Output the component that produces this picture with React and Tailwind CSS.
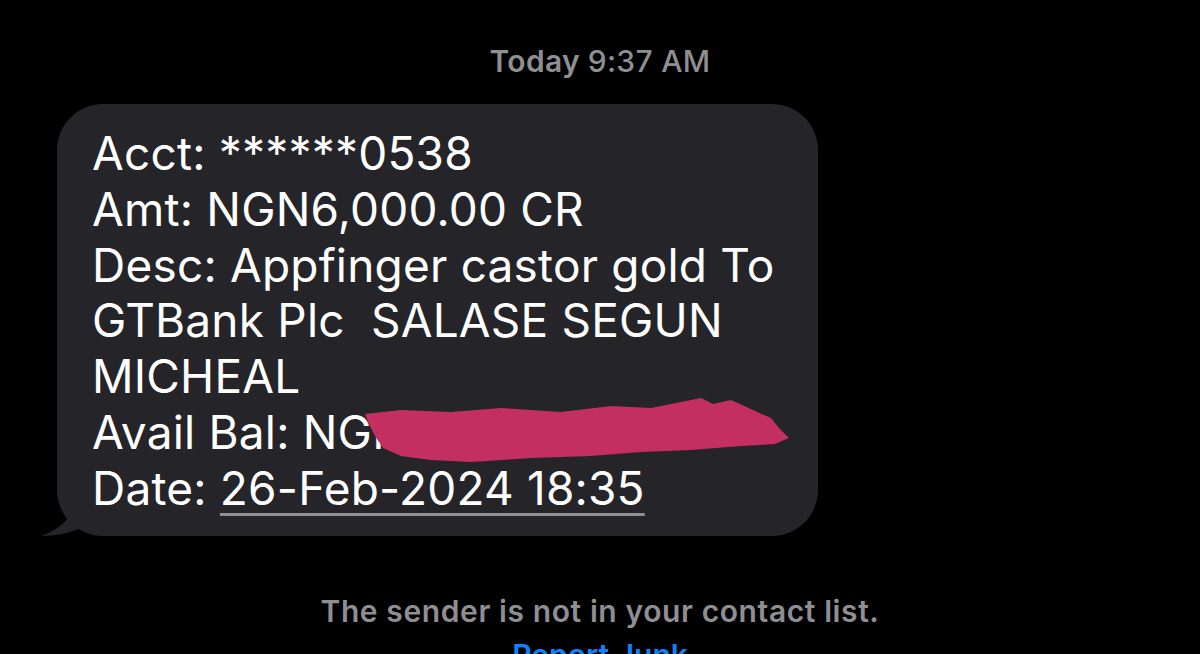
const lines = [
  "Acct: ******0538",
  "Amt: NGN6,000.00 CR",
  "Desc: Appfinger castor gold To",
  "GTBank Plc  SALASE SEGUN",
  "MICHEAL",
];

const Scribble = () => (
  <svg
    className="absolute left-[304px] top-[288px]"
    width="440"
    height="76"
    viewBox="0 0 440 76"
  >
    <path
      d="M4 22 L40 18 L90 20 L140 16 L200 20 L250 14 L290 16 L320 10 L340 6 L352 12 L370 8 L392 18 L410 26 L418 36 L428 46 L414 52 L380 54 L330 58 L280 60 L230 64 L170 66 L110 70 L70 68 L40 64 L22 56 L14 44 L8 32 Z"
      fill="#c32f60"
    />
  </svg>
);

export default function App() {
  return (
    <div
      className="w-[1200px] h-[654px] bg-black overflow-hidden flex flex-col"
      style={{ fontFamily: "Inter, 'Liberation Sans', sans-serif" }}
    >
      <div className="shrink-0 pt-[44px] text-center text-[30px] font-semibold text-[#8e8e93] leading-[34px] tracking-[0.3px]">
        Today <span className="font-medium">9:37 AM</span>
      </div>
      <div className="relative shrink-0 ml-[57px] mt-[26px] w-[761px] h-[432px]">
        <svg
          className="absolute -left-[16px] bottom-0"
          width="60"
          height="50"
          viewBox="0 0 60 50"
        >
          <path d="M40 0 C36 22 28 40 0 50 C18 50 34 46 48 38 Z" fill="#252529" />
        </svg>
        <div className="relative h-full rounded-[46px] bg-[#252529] pl-[35px] pt-[22px] text-white text-[46px] leading-[55.8px] tracking-[0.2px]">
          {lines.map((l) => (
            <div key={l} className="whitespace-pre">{l}</div>
          ))}
          <div>Avail Bal: NGN</div>
          <div>
            Date:{" "}
            <span className="underline decoration-[#8e8e93] decoration-[3px] underline-offset-[8px]">
              26-Feb-2024 18:35
            </span>
          </div>
          <Scribble />
        </div>
      </div>
      <div className="shrink-0 mt-[58px] text-center text-[30px] font-semibold text-[#8e8e93] leading-[34px] tracking-[0.6px]">
        The sender is not in your contact list.
      </div>
      <div className="shrink-0 mt-[10px] text-center text-[30px] font-semibold text-[#0a84ff] leading-[34px]">
        Report Junk
      </div>
    </div>
  );
}
